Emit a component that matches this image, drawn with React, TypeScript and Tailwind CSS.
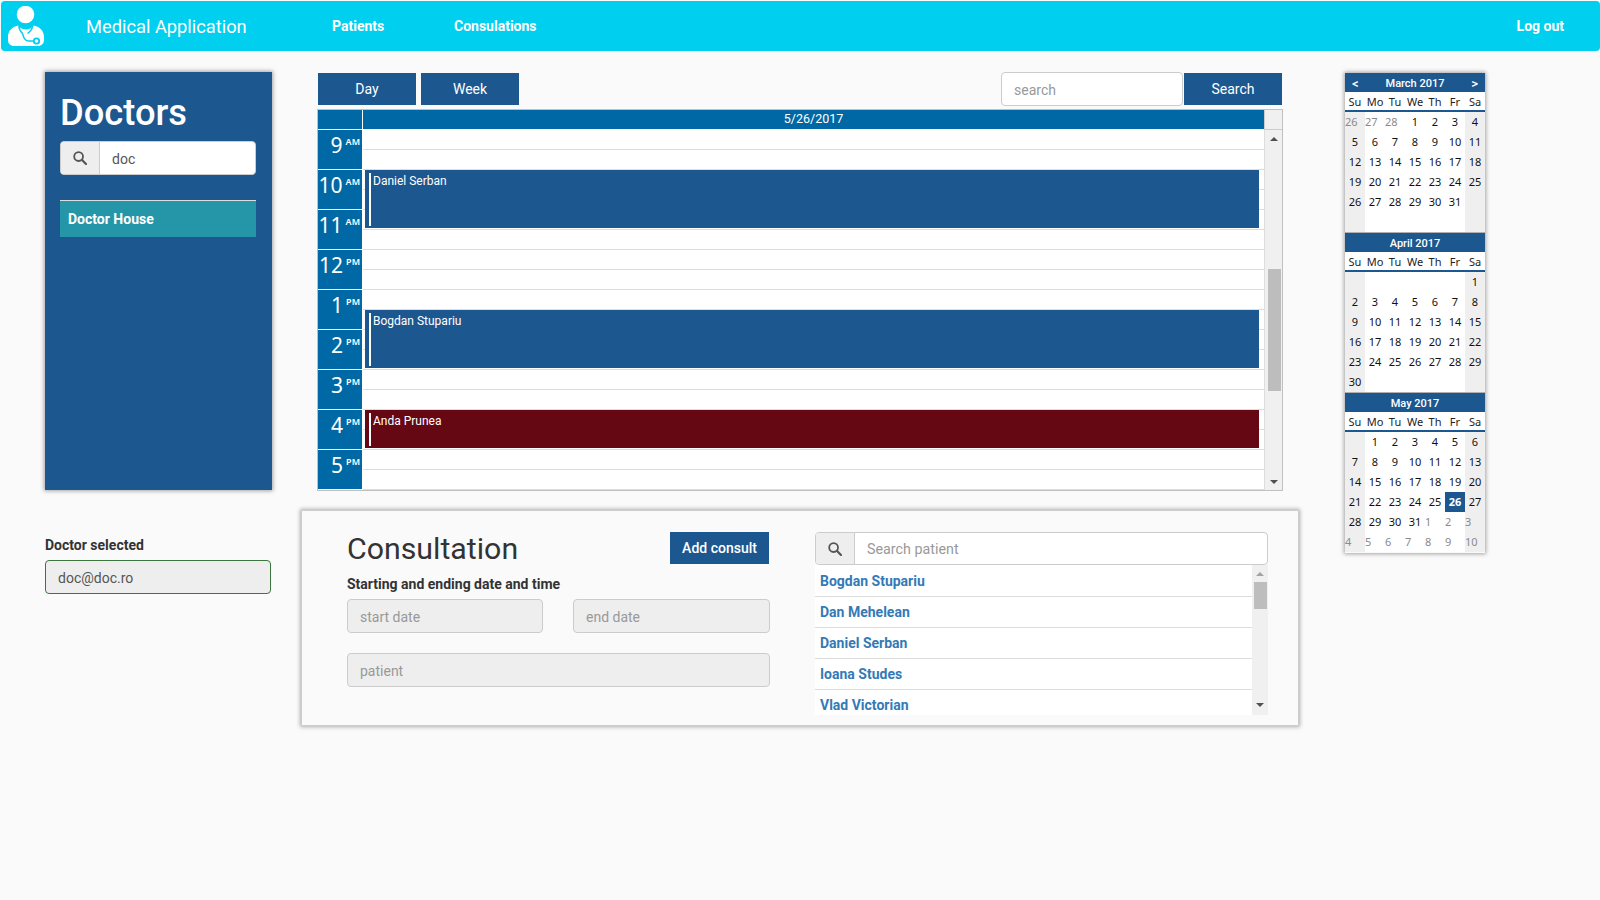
import React from "react";

const roboto = "font-['Roboto',sans-serif]";
const cal = "font-['Noto_Sans',sans-serif]";

function SearchIcon() {
  return (
    <svg width="14" height="14" viewBox="0 0 14 14" fill="none" stroke="#555" strokeWidth="1.8">
      <circle cx="5.6" cy="5.6" r="4.4" />
      <path d="M8.8 8.8 13 13" strokeWidth="2.2" strokeLinecap="round" />
    </svg>
  );
}

function Logo() {
  return (
    <svg width="36" height="40" viewBox="0 0 36 40" fill="#fff">
      <ellipse cx="17.5" cy="8.5" rx="8.8" ry="8.7" />
      <path d="M10 19.5C4 21 0 25 0 31v3c0 3.500 2.500 6 6 6h24c3.500 0 6-2.500 6-6v-3c0-6-4-10-10-11.500C24 22 21 23.500 18 23.500S12 22 10 19.500z" />
      <path d="M11 20c0 3 2 6 3.500 7.500 1 3.500 2 7.500 6 7.500h6" fill="none" stroke="#00cfef" strokeWidth="1.500" />
      <path d="M24.500 20c0 3-3 6-5 7.500" fill="none" stroke="#00cfef" strokeWidth="1.500" />
      <circle cx="28.500" cy="35" r="3.600" fill="#00cfef" />
      <circle cx="28.500" cy="35" r="1.800" fill="#fff" />
    </svg>
  );
}

function Navbar() {
  return (
    <div className="ml-px mt-px flex h-[50px] w-[1599px] items-center rounded-[4px] bg-[#00cfef] text-white">
      <div className="ml-[7px] w-[78px]">
        <Logo />
      </div>
      <span className="w-[246px] pt-[2px] text-[18.3px]">Medical Application</span>
      <span className="w-[122px] text-[14px] font-bold">Patients</span>
      <span className="text-[14px] font-bold">Consulations</span>
      <span className="ml-auto mr-[36px] text-[14px] font-bold">Log out</span>
    </div>
  );
}

function DoctorsColumn() {
  return (
    <div className="ml-[45px] w-[227px]">
      <div className="mt-[21px] h-[418px] bg-[#1d5790] pl-[15px] pr-[16px] pt-[15px] shadow-[0_0_4px_1px_rgba(0,0,0,0.35)]">
        <div className="h-[54px] text-[36.300px] font-medium leading-[52px] text-white">Doctors</div>
        <div className="flex h-[34px] overflow-hidden rounded-[4px] border border-[#ccc] bg-white">
          <div className="flex w-[39px] items-center justify-center border-r border-[#ccc] bg-[#eee]">
            <SearchIcon />
          </div>
          <div className="flex items-center pl-[12px] pt-[2px] text-[14px] text-[#555]">doc</div>
        </div>
        <div className="mt-[25px] flex h-[37px] items-center border-t border-[#ddd] bg-[#2596a8] pl-[8px] text-[14px] font-bold text-white">
          Doctor House
        </div>
      </div>
      <div className="mt-[46px] text-[14px] font-bold leading-[18px] text-[#333]">Doctor selected</div>
      <div className="mr-[1px] mt-[6px] flex h-[34px] items-center rounded-[4px] border border-[#3c763d] bg-[#eee] pl-[12px] pt-[2px] text-[14px] text-[#555]">
        doc@doc.ro
      </div>
    </div>
  );
}

const hours: [string, string][] = [
  ["9", "AM"], ["10", "AM"], ["11", "AM"], ["12", "PM"], ["1", "PM"],
  ["2", "PM"], ["3", "PM"], ["4", "PM"], ["5", "PM"],
];

function TriUp({ color }: { color: string }) {
  return <div className={`h-0 w-0 border-x-[4px] border-b-[4px] border-x-transparent ${color}`} />;
}
function TriDown({ color }: { color: string }) {
  return <div className={`h-0 w-0 border-x-[4px] border-t-[4px] border-x-transparent ${color}`} />;
}

function Event({ top, h, name, bg }: { top: number; h: number; name: string; bg: string }) {
  return (
    <div
      className={`absolute left-[2px] flex w-[894px] pl-[4px] pt-[3px] ${bg} text-[12px] text-white`}
      style={{ top, height: h }}
    >
      <div className="mr-[2px] w-[2px] bg-white" style={{ height: h - 5 }} />
      <span className="mt-[1px] leading-[15px]">{name}</span>
    </div>
  );
}

function Scheduler() {
  return (
    <div className={`-ml-[1px] mt-[4px] flex h-[382px] w-[966px] flex-col border border-[#c0c0c0] ${cal}`}>
      <div className="flex h-[20px] shrink-0">
        <div className="w-[45px] border-b border-r border-b-white border-r-white bg-[#0069a5]" />
        <div className="h-[19px] w-[901px] bg-[#0069a5] text-center font-['Roboto',sans-serif] text-[12.500px] leading-[17px] text-white">5/26/2017</div>
        <div className="flex-1 border-b border-l border-[#ccc] bg-[#f0f0f0]" />
      </div>
      <div className="flex min-h-0 flex-1">
        <div className="w-[45px] shrink-0">
          {hours.map(([h, s]) => (
            <div key={h} className="flex h-[40px] justify-end border-b border-r border-b-white border-r-white bg-[#0069a5] pr-[2px] text-white">
              <span className="text-[21px] leading-[30px]">{h}</span>
              <span className="ml-[3px] mt-[6px] text-[9px] font-semibold leading-[12px]">{s}</span>
            </div>
          ))}
        </div>
        <div className="relative w-[902px] shrink-0 overflow-hidden border-r border-[#ddd] bg-white font-['Roboto',sans-serif]">
          {hours.map(([h]) => (
            <div key={h} className="h-[40px]">
              <div className="h-[20px] border-b border-[#ddd]" />
              <div className="h-[20px] border-b border-[#ddd]" />
            </div>
          ))}
          <Event top={40} h={58} name="Daniel Serban" bg="bg-[#1d5790]" />
          <Event top={180} h={58} name="Bogdan Stupariu" bg="bg-[#1d5790]" />
          <Event top={280} h={38} name="Anda Prunea" bg="bg-[#660814]" />
        </div>
        <div className="flex flex-1 flex-col items-center bg-[#f0f0f0] pl-[1px] pt-[7px]">
          <TriUp color="border-b-[#505050]" />
          <div className="mt-[128px] h-[122px] w-[13px] bg-[#bdbdbd]" />
          <div className="mb-[6px] mt-auto">
            <TriDown color="border-t-[#505050]" />
          </div>
        </div>
      </div>
    </div>
  );
}

function Input({ text, className }: { text: string; className: string }) {
  return (
    <div className={`flex h-[34px] items-center rounded-[4px] border border-[#ccc] bg-[#eee] pl-[12px] pt-[2px] text-[14px] text-[#999] ${className}`}>
      {text}
    </div>
  );
}

function Consultation() {
  const patients = ["Bogdan Stupariu", "Dan Mehelean", "Daniel Serban", "Ioana Studes", "Vlad Victorian"];
  return (
    <div className="mt-[19px] flex h-[216px] border border-[#ccc] bg-[#fafafa] pl-[45px] pt-[21px] shadow-[0_0_4px_1px_rgba(0,0,0,0.3)]">
      <div className="w-[423px]">
        <div className="flex h-[42px] items-start justify-between">
          <span className="pt-[1px] text-[30.300px] font-normal leading-[32px] text-[#333]">Consultation</span>
          <div className="mr-[1px] flex h-[32px] w-[99px] items-center justify-center bg-[#1d5790] text-[14px] font-medium text-white">Add consult</div>
        </div>
        <div className="mt-[1px] text-[14px] font-bold leading-[18px] text-[#333]">Starting and ending date and time</div>
        <div className="mt-[6px] flex justify-between">
          <Input text="start date" className="w-[196px]" />
          <Input text="end date" className="w-[197px]" />
        </div>
        <Input text="patient" className="mt-[20px] w-full" />
      </div>
      <div className="ml-[45px] w-[453px]">
        <div className="flex h-[33px] overflow-hidden rounded-[4px] border border-[#ccc] bg-white">
          <div className="flex w-[39px] items-center justify-center border-r border-[#ccc] bg-[#eee]">
            <SearchIcon />
          </div>
          <div className="flex items-center pl-[12px] pt-[2px] text-[14.300px] text-[#999]">Search patient</div>
        </div>
        <div className="flex h-[150px] overflow-hidden">
          <div className="flex-1 bg-white pt-[1px]">
            {patients.map((p) => (
              <div key={p} className="flex h-[31px] items-center border-b border-[#ddd] pl-[5px] text-[14px] font-bold text-[#337ab7]">
                {p}
              </div>
            ))}
          </div>
          <div className="flex w-[16px] flex-col items-center bg-[#f0f0f0] pt-[7px]">
            <TriUp color="border-b-[#a3a3a3]" />
            <div className="mt-[6px] h-[27px] w-[13px] bg-[#bdbdbd]" />
            <div className="mb-[8px] mt-auto">
              <TriDown color="border-t-[#505050]" />
            </div>
          </div>
        </div>
      </div>
    </div>
  );
}

type MonthProps = { title: string; start: number; len: number; prevLen: number; arrows?: boolean; sel?: number };
const dow = ["Su", "Mo", "Tu", "We", "Th", "Fr", "Sa"];

function Month({ title, start, len, prevLen, arrows, sel }: MonthProps) {
  const cells: { t: number; other: boolean }[] = [];
  const showPrev = title === "March 2017";
  const showNext = title === "May 2017";
  for (let i = 0; i < start; i++) cells.push({ t: prevLen - start + i + 1, other: true });
  for (let d = 1; d <= len; d++) cells.push({ t: d, other: false });
  let n = 1;
  while (cells.length < 42) cells.push({ t: n++, other: true });
  return (
    <div className="h-[160px] border-b border-[#b0b0b0] last:border-b-0">
      <div className="flex h-[19px] items-center justify-between bg-[#1d5790] px-[7px] pt-[3px] font-['Roboto',sans-serif] text-[11px] font-medium text-white">
        <span className="w-[10px] text-[13px]">{arrows ? "<" : ""}</span>
        <span>{title}</span>
        <span className="w-[10px] text-right text-[13px]">{arrows ? ">" : ""}</span>
      </div>
      <div className="grid h-[20px] grid-cols-7 border-b-2 border-[#1d5790] bg-white pt-[2px]">
        {dow.map((d) => (
          <div key={d} className="flex items-center justify-center text-[11px] text-[#222]">{d}</div>
        ))}
      </div>
      <div className="grid grid-cols-7">
        {cells.map((c, i) => {
          const weekend = i % 7 === 0 || i % 7 === 6;
          const hidden = c.other && !((showPrev && i < 7) || (showNext && i >= 7));
          const selected = !c.other && c.t === sel;
          return (
            <div
              key={i}
              className={`flex h-[20px] items-center text-[11px] ${
                selected
                  ? "justify-center bg-[#1d5790] font-bold text-white"
                  : weekend
                  ? "bg-[#efefef]"
                  : "bg-white"
              } ${c.other ? "justify-start text-[#8a8a8a]" : "justify-center"} ${!selected && !c.other ? "text-[#111]" : ""}`}
            >
              {hidden ? "" : c.t}
            </div>
          );
        })}
      </div>
    </div>
  );
}

function Navigator() {
  return (
    <div className={`ml-[46px] mt-[22px] h-[480px] w-[140px] shadow-[0_0_4px_1px_rgba(0,0,0,0.35)] ${cal}`}>
      <Month title="March 2017" start={3} len={31} prevLen={28} arrows />
      <Month title="April 2017" start={6} len={30} prevLen={31} />
      <Month title="May 2017" start={1} len={31} prevLen={30} sel={26} />
    </div>
  );
}

export default function App() {
  return (
    <div className={`h-[900px] w-[1600px] overflow-hidden bg-[#fafafa] ${roboto}`}>
      <Navbar />
      <div className="flex">
        <DoctorsColumn />
        <div className="ml-[29px] w-[998px]">
          <div className="ml-[17px] mr-[17px] pt-[22px]">
            <div className="flex h-[32px] items-stretch text-[14px] text-white">
              <div className="flex w-[98px] items-center justify-center bg-[#1d5790]">Day</div>
              <div className="ml-[5px] flex w-[98px] items-center justify-center bg-[#1d5790]">Week</div>
              <div className="-mt-[1px] ml-auto flex h-[34px] w-[182px] items-center rounded-[4px] border border-[#ccc] bg-white pl-[12px] pt-[2px] text-[#999]">search</div>
              <div className="ml-[1px] flex w-[98px] items-center justify-center bg-[#1d5790]">Search</div>
            </div>
            <Scheduler />
          </div>
          <Consultation />
        </div>
        <Navigator />
      </div>
    </div>
  );
}
